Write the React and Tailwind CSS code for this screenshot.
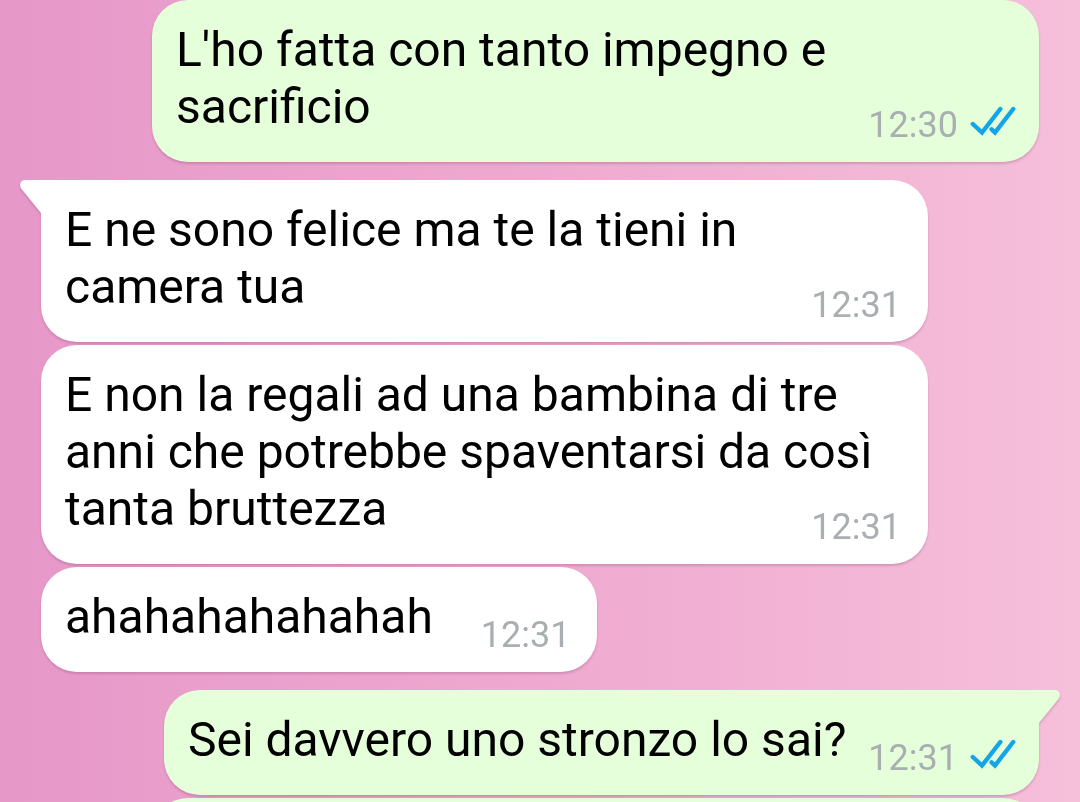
import React from 'react';
import { clsx } from 'clsx';

const messages = [
    { id: 1, mine: true, text: "L'ho fatta con tanto impegno e sacrificio", time: '12:30' },
    { id: 2, mine: false, first: true, text: 'E ne sono felice ma te la tieni in camera tua', time: '12:31' },
    { id: 3, mine: false, text: 'E non la regali ad una bambina di tre anni che potrebbe spaventarsi da così tanta bruttezza', time: '12:31' },
    { id: 4, mine: false, text: 'ahahahahahahah', time: '12:31' },
    { id: 5, mine: true, first: true, text: 'Sei davvero uno stronzo lo sai?', time: '12:31' },
];

// Blue double tick shown on read messages
const ReadTicks = () => (
    <svg
        viewBox="0 0 46 34"
        className="h-[34px] w-[46px]"
        fill="none"
        stroke="#12a5e8"
        strokeWidth="4.4"
        strokeLinecap="round"
        strokeLinejoin="miter"
        aria-label="Letto"
    >
        <path d="M2.8 20 L12 28.5 L30.3 5" />
        <path d="M21.6 25.3 L25 28.5 L43.2 5" />
    </svg>
);

// Little corner that sticks out of the first bubble of a group
const Tail = ({ mine }) => (
    <svg
        viewBox="0 0 22 34"
        className={clsx(
            'absolute top-0 h-[34px] w-[22px]',
            mine ? '-right-[21px] -scale-x-100 text-[#e6ffdb]' : '-left-[21px] text-white'
        )}
        fill="currentColor"
        aria-hidden="true"
    >
        <path d="M22 0 H5.5 C0.5 0 -1.5 5 1.5 9 L21 33 H22 Z" />
    </svg>
);

const Bubble = ({ message }) => {
    const { mine, first, text, time } = message;

    return (
        <div className={clsx('flex', mine ? 'justify-end' : 'justify-start', first && 'mt-[15px]')}>
            <div
                className={clsx(
                    'relative max-w-[887px] rounded-[36px] pt-[21px] pb-4 pl-6 drop-shadow-[0_2px_1px_rgba(120,50,95,0.25)]',
                    mine ? 'bg-[#e6ffdb] pr-[23px]' : 'bg-white pr-[27px]',
                    first && (mine ? 'rounded-tr-none' : 'rounded-tl-none')
                )}
            >
                {first && <Tail mine={mine} />}
                <p className="text-[48px] leading-[57px] text-black">
                    {text}
                    <span
                        className={clsx(
                            'float-right mt-[26px] flex gap-3 text-[36px] leading-[42px] text-[#a9afb1]',
                            mine ? 'ml-[22px]' : 'ml-12'
                        )}
                    >
                        {time}
                        {mine && <ReadTicks />}
                    </span>
                </p>
            </div>
        </div>
    );
};

export default function App() {
    return (
        <main className="h-screen overflow-hidden bg-linear-to-r from-[#e698c9] via-[#efa9d0] to-[#f6bfda] px-[41px] font-[Roboto,sans-serif]">
            <div className="flex flex-col gap-[3px]">
                {messages.map((message) => (
                    <Bubble key={message.id} message={message} />
                ))}
                {/* next message, still below the fold */}
                <div className="h-[105px] w-full max-w-[887px] self-end rounded-[36px] bg-[#e6ffdb]" />
            </div>
        </main>
    );
}
